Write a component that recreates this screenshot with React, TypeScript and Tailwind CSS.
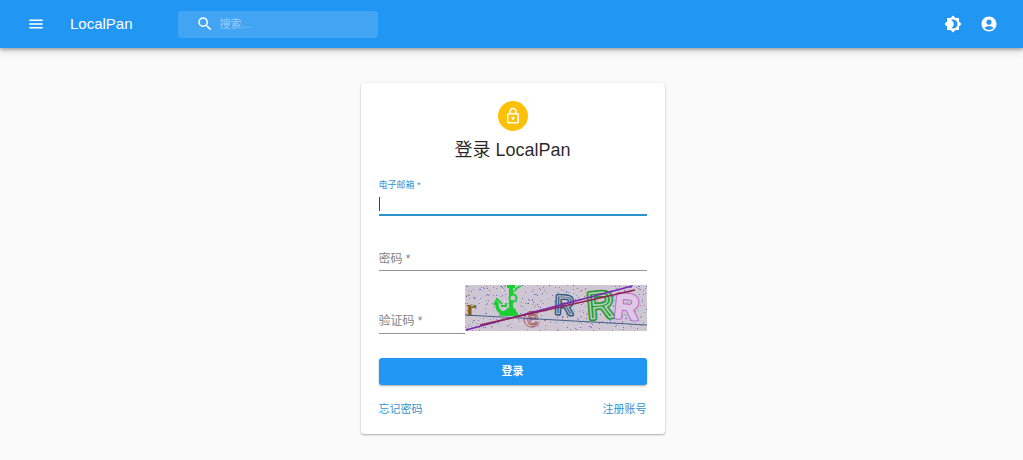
import type { ReactNode } from "react";
import { MdAccountCircle, MdBrightness4, MdMenu, MdOutlineLock, MdSearch } from "react-icons/md";

const NOISE_COLORS = ["#5a3fc0", "#7d6f86", "#3f6fb0", "#a06a8c", "#5f9a6a", "#8a4fd0", "#f0e8f4"];

const noise = (() => {
  let seed = 7;
  const next = () => {
    seed = (seed * 16807) % 2147483647;
    return seed / 2147483647;
  };
  return Array.from({ length: 480 }, () => ({
    x: Math.floor(next() * 182),
    y: Math.floor(next() * 46),
    color: NOISE_COLORS[Math.floor(next() * NOISE_COLORS.length)],
  }));
})();

function Captcha() {
  return (
    <svg viewBox="0 0 182 46" className="block h-[46px] w-[182px]" role="img" aria-label="验证码图片">
      <rect width="182" height="46" fill="#cfc6d3" />
      {noise.map((dot, i) => (
        <rect key={i} x={dot.x} y={dot.y} width="1" height="1" fill={dot.color} opacity="0.75" />
      ))}
      <text x="1" y="31" fontFamily="Liberation Serif, serif" fontWeight="700" fontSize="24" fill="#806020">r</text>
      <g stroke="#18cf30" fill="none">
        <path d="M42 1h8M46 1v24" strokeWidth="4" />
        <path d="M50 4l6-3M48 7l4-3" strokeWidth="1.5" />
        <path d="M32 17c-1 10 7 14 13 8" strokeWidth="3.5" />
        <path d="M29 20l3-6 5 5M36 21h5v-3" strokeWidth="1.8" />
        <path d="M34 30l13-9 7 10z" fill="#18cf30" strokeWidth="1" />
        <circle cx="48" cy="13" r="3.5" strokeWidth="2" fill="#cfc6d3" />
      </g>
      <path d="M73 29a8 8 0 1 0 1 9" fill="none" stroke="#a75b61" strokeWidth="1" />
      <text x="62" y="40" fontFamily="Liberation Sans, sans-serif" fontSize="21" fill="#d8ced8" stroke="#a75b61" strokeWidth="1">e</text>
      <g fontFamily="Liberation Sans, sans-serif" fill="none" strokeLinejoin="round">
        <text x="90" y="29" fontSize="26" stroke="#31597c" strokeWidth="4" transform="rotate(3 98 20)">R</text>
        <text x="90" y="29" fontSize="26" stroke="#c4c5d3" strokeWidth="1" transform="rotate(3 98 20)">R</text>
        <text x="122" y="33" fontSize="37" stroke="#2c9a3a" strokeWidth="5" transform="rotate(-5 134 20)">R</text>
        <text x="122" y="33" fontSize="37" stroke="#b4d2b9" strokeWidth="1.5" transform="rotate(-5 134 20)">R</text>
        <text x="150" y="33" fontSize="33" stroke="#bd63cc" strokeWidth="5" transform="rotate(6 162 20)">R</text>
        <text x="150" y="33" fontSize="33" stroke="#dec8e6" strokeWidth="3" transform="rotate(6 162 20)">R</text>
      </g>
      <path d="M0 30L182 40" stroke="#40618c" strokeWidth="1" />
      <path d="M1 45L167 1" stroke="#7928b5" strokeWidth="1.5" />
      <path d="M15 40L170 5" stroke="#922052" strokeWidth="1.5" />
    </svg>
  );
}

function IconButton({ label, children }: { label: string; children: ReactNode }) {
  return (
    <button type="button" aria-label={label} className="flex size-9 items-center justify-center rounded-full text-lg">
      {children}
    </button>
  );
}

function Header() {
  return (
    <header className="flex h-12 items-center bg-[#2196f3] pr-4 pl-[18px] text-white shadow-[0_2px_3px_rgba(0,0,0,0.25),0_3px_8px_rgba(0,0,0,0.14)]">
      <IconButton label="菜单"><MdMenu /></IconButton>
      <span className="ml-4 text-[15px]">LocalPan</span>
      <label className="ml-[45px] flex h-[27px] w-[200px] items-center gap-1.5 rounded-[3px] bg-white/15 pl-[18px]">
        <MdSearch className="shrink-0 text-lg" />
        <input type="search" aria-label="搜索" placeholder="搜索..." className="w-full min-w-0 bg-transparent text-[11px] outline-none placeholder:text-white/45" />
      </label>
      <div className="ml-auto flex">
        <IconButton label="切换深色模式"><MdBrightness4 /></IconButton>
        <IconButton label="账号"><MdAccountCircle /></IconButton>
      </div>
    </header>
  );
}

function LoginCard() {
  return (
    <main className="mx-auto mt-[35px] w-[304px] translate-x-px rounded-[3px] bg-white px-[18px] pt-[18px] pb-[17px] shadow-[0_1px_2px_rgba(0,0,0,0.3),0_0_1px_rgba(0,0,0,0.15)]">
      <div className="flex flex-col items-center">
        <div className="flex size-[30px] items-center justify-center rounded-full bg-[#ffc107] text-lg text-white">
          <MdOutlineLock />
        </div>
        <h1 className="mt-[5px] text-lg leading-7 text-black/85">登录 LocalPan</h1>
      </div>
      <form className="mt-[13px]">
        <div className="border-b-2 border-[#2c93cf]">
          <label htmlFor="email" className="block text-[9px] leading-4 text-[#3594d6]">电子邮箱 *</label>
          <div className="flex h-[21px] items-center">
            <span className="h-[14px] w-px bg-gray-700" />
            <input id="email" type="email" className="w-full bg-transparent text-xs caret-transparent outline-none" />
          </div>
        </div>
        <div className="mt-7 flex h-[27px] items-center border-b border-[#949494] pt-1">
          <label htmlFor="password" className="shrink-0 text-xs text-[#858585]">密码 *</label>
          <input id="password" type="password" className="ml-1 w-full min-w-0 bg-transparent text-xs outline-none" />
        </div>
        <div className="mt-[14px] flex">
          <div className="flex h-[49px] min-w-0 flex-1 items-end border-b border-[#949494] pb-1">
            <label htmlFor="captcha" className="shrink-0 text-xs text-[#858585]">验证码 *</label>
            <input id="captcha" className="ml-1 w-full min-w-0 bg-transparent text-xs outline-none" />
          </div>
          <Captcha />
        </div>
        <button type="submit" className="mt-6 h-[27px] w-full rounded-[3px] bg-[#2196f3] text-[11px] font-bold text-white shadow-[0_1px_2px_rgba(0,0,0,0.35)]">登录</button>
      </form>
      <div className="mt-4 flex justify-between text-[11px] leading-4 text-[#3594cc]">
        <a href="#forgot">忘记密码</a>
        <a href="#register">注册账号</a>
      </div>
    </main>
  );
}

export default function App() {
  return (
    <div className="min-h-screen bg-[#fafafa] font-['Liberation_Sans','Noto_Sans_CJK_SC',sans-serif]">
      <Header />
      <LoginCard />
    </div>
  );
}
